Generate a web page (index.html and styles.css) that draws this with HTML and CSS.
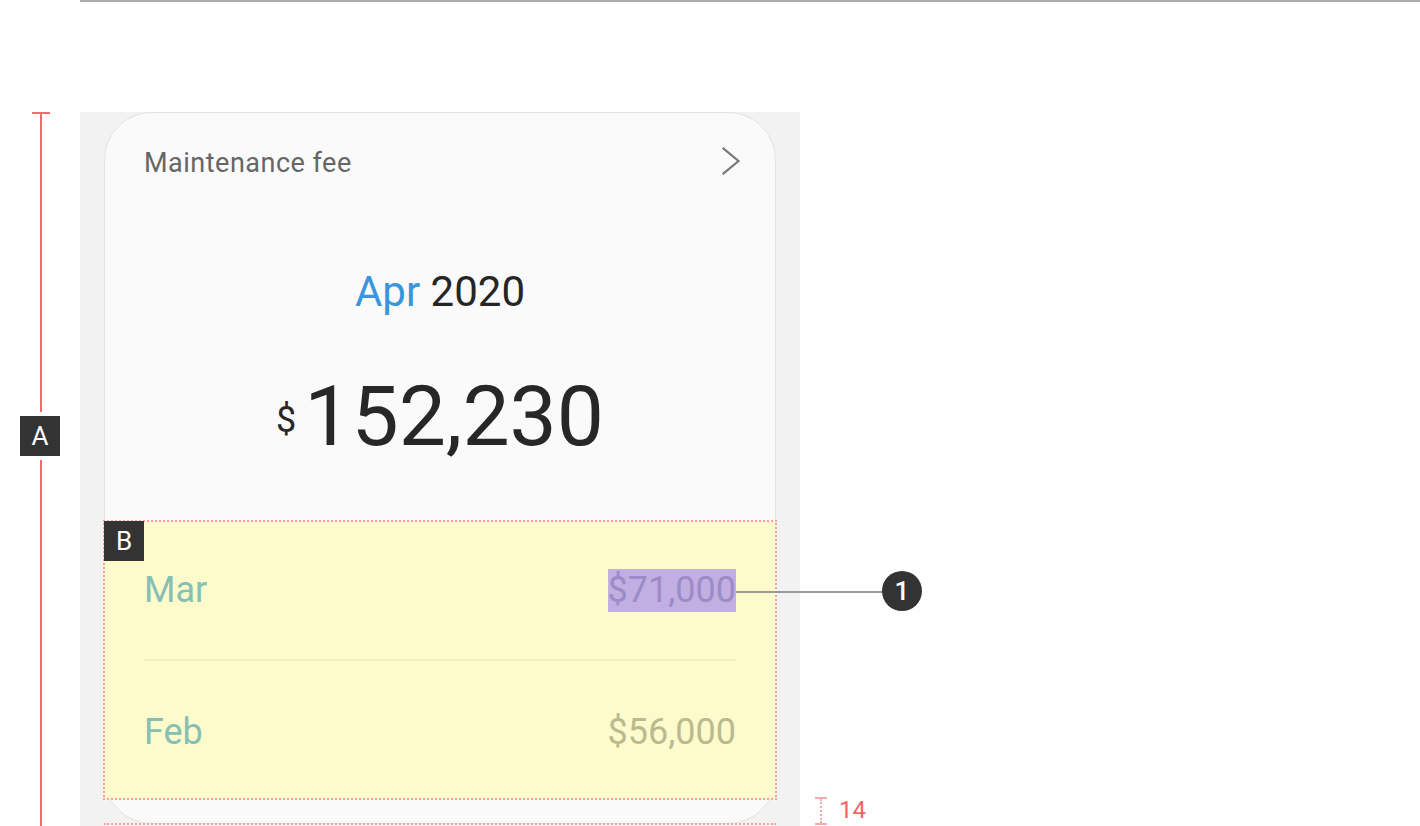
FILE: index.html
```html
<!DOCTYPE html>
<html lang="en">
<head>
<meta charset="utf-8">
<title>Maintenance fee card spec</title>
<link rel="stylesheet" href="styles.css">
</head>
<body>
<div class="page">
  <div class="topline"></div>

  <div class="stage">
    <div class="dim-a">
      <span class="dim-a-cap"></span>
      <span class="tag tag-a">A</span>
    </div>

    <div class="frame">
      <div class="card">
        <div class="card-header">
          <span class="card-title">Maintenance fee</span>
          <svg class="chevron" width="20" height="30" viewBox="0 0 20 30" aria-hidden="true">
            <polyline points="2.5,2.5 17.5,15 2.5,27.5" fill="none" stroke="#777" stroke-width="2.2" stroke-linecap="square"/>
          </svg>
        </div>

        <div class="period"><span class="month">Apr</span> <span class="year">2020</span></div>

        <div class="amount"><span class="currency">$</span><span class="value">152,230</span></div>

        <div class="history">
          <span class="tag tag-b">B</span>
          <div class="row">
            <span class="row-month">Mar</span>
            <span class="row-value row-value-hl">$71,000<span class="callout-line"></span><span class="callout-dot">1</span></span>
          </div>
          <div class="divider"></div>
          <div class="row">
            <span class="row-month">Feb</span>
            <span class="row-value">$56,000</span>
          </div>
        </div>
        <div class="pad-mark"></div>
      </div>
    </div>

    <div class="dim-14">
      <span class="ibeam"></span>
      <span class="dim-14-label">14</span>
    </div>
  </div>
</div>
</body>
</html>
```

FILE: styles.css
```css
* { box-sizing: border-box; }

html, body {
  margin: 0;
  padding: 0;
  background: #ffffff;
  overflow: hidden;
}

body {
  font-family: Roboto, "Liberation Sans", Arial, sans-serif;
  width: 1420px;
  height: 826px;
}

.page {
  position: relative;
  width: 1420px;
  height: 826px;
}

.topline {
  margin-left: 80px;
  height: 2px;
  background: #acacac;
}

.stage {
  position: relative;
  padding: 110px 0 0 80px;
}

/* dimension A (annotation) */
.dim-a {
  position: absolute;
  left: 40px;
  top: 110px;
  width: 2px;
  height: 714px;
  background: #f76a6a;
}
.dim-a-cap {
  position: absolute;
  left: -8px;
  top: 0;
  width: 18px;
  height: 2px;
  background: #f76a6a;
}

.tag {
  position: absolute;
  width: 40px;
  height: 40px;
  background: #333333;
  color: #ffffff;
  font-size: 26px;
  line-height: 40px;
  text-align: center;
}
.tag-a {
  left: -20px;
  top: 304px;
  outline: 4px solid #ffffff;
}
.tag-b {
  left: 0;
  top: 0;
  z-index: 2;
}

/* frame + card */
.frame {
  width: 720px;
  height: 714px;
  background: #f2f2f2;
  padding: 0 24px;
}

.card {
  position: relative;
  height: 712px;
  background: #fafafa;
  border: 1px solid #e3e3e3;
  border-radius: 48px;
  padding: 35px 0 0;
}

.card-header {
  display: flex;
  justify-content: space-between;
  align-items: flex-start;
  padding: 0 34px 0 39px;
  height: 30px;
}

.card-title {
  font-size: 27px;
  line-height: 30px;
  letter-spacing: 0.5px;
  color: #666666;
}

.chevron {
  margin-top: -2px;
}

.period {
  margin-top: 89px;
  text-align: center;
  font-size: 42px;
  line-height: 50px;
  color: #252525;
}
.month { color: #3896dc; }

.amount {
  margin-top: 50px;
  text-align: center;
  height: 100px;
  line-height: 100px;
  color: #272727;
}
.currency {
  font-size: 36px;
  vertical-align: 13px;
  margin-right: 8px;
}
.value {
  font-size: 84px;
}

/* history section (B annotated) */
.history {
  position: relative;
  margin: 54px -1px 0;
  height: 278px;
  background: #fdfbcc;
  outline: 2px dotted #f6a2a2;
  outline-offset: -1px;
}

.row {
  display: flex;
  justify-content: space-between;
  align-items: center;
  height: 138px;
  padding: 0 40px;
}
.row:last-child {
  padding-top: 4px;
}

.row-month {
  font-size: 36px;
  color: #88bfb5;
}

.row-value {
  position: relative;
  font-size: 36px;
  line-height: 43px;
  color: #bbba8e;
}

.row-value-hl {
  background: #c1afe1;
  color: #9c8bc6;
}

.divider {
  height: 2px;
  margin: 0 40px;
  background: #f2efc3;
}

.callout-line {
  position: absolute;
  left: 100%;
  top: 22px;
  width: 150px;
  height: 2px;
  background: #9a9a9a;
}

.callout-dot {
  position: absolute;
  left: calc(100% + 146px);
  top: 2px;
  width: 40px;
  height: 40px;
  border-radius: 50%;
  background: #333333;
  color: #ffffff;
  font-size: 26px;
  font-weight: 500;
  line-height: 40px;
  text-align: center;
}

.pad-mark {
  position: absolute;
  left: -1px;
  right: -1px;
  bottom: -2px;
  height: 0;
  border-bottom: 2px dotted #f6a2a2;
}

/* 14 dimension */
.dim-14 {
  position: absolute;
  left: 815px;
  top: 795px;
  height: 29px;
  display: flex;
  align-items: flex-start;
}
.ibeam {
  position: relative;
  width: 12px;
  height: 28px;
  border-top: 2px solid #f8aaaa;
  border-bottom: 2px solid #f8aaaa;
}
.ibeam::after {
  content: "";
  position: absolute;
  left: 5px;
  top: 0;
  bottom: 0;
  border-left: 2px dotted #f8aaaa;
}
.dim-14-label {
  margin-left: 12px;
  margin-top: 1px;
  font-size: 24px;
  line-height: 24px;
  color: #f46464;
}
```
